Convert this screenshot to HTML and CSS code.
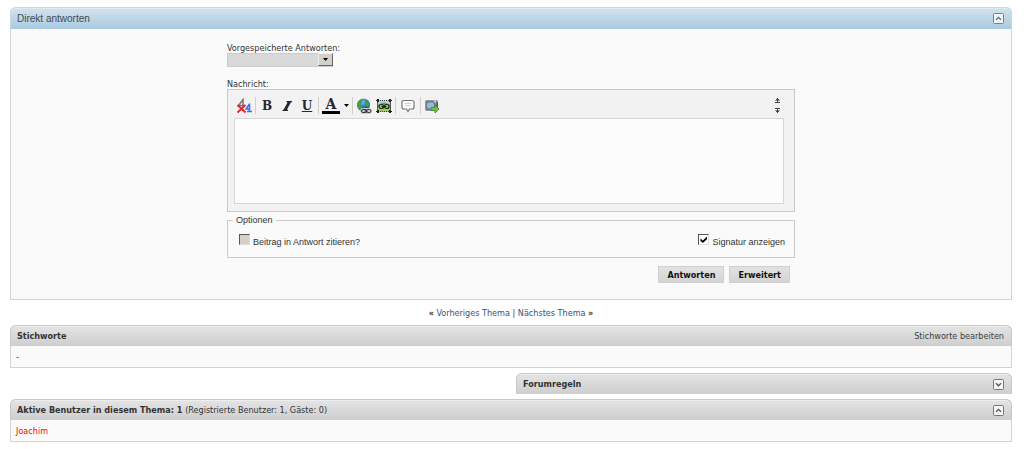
FILE: index.html
```html
<!DOCTYPE html>
<html lang="de">
<head>
<meta charset="utf-8">
<title>Direkt antworten</title>
<link rel="stylesheet" href="styles.css">
</head>
<body>
<main class="page">
  <section class="panel">
    <header class="bar bar-blue">
      <h2 class="bar-title">Direkt antworten</h2>
      <button class="collapse" type="button" aria-label="Einklappen">
        <svg width="11" height="11" viewBox="0 0 11 11"><rect class="box" x=".5" y=".5" width="10" height="10" rx="1"/><path class="chevron" d="M3 6.800 5.500 4.300 8 6.800"/></svg>
      </button>
    </header>
    <form class="reply">
      <div class="reply-column">
        <label class="label" for="saved">Vorgespeicherte Antworten:</label>
        <div class="select">
          <select id="saved"><option></option></select>
          <span class="select-arrow"></span>
        </div>
        <label class="label label-message" for="message">Nachricht:</label>
        <div class="editor">
          <div class="toolbar">
            <button class="tool" type="button" aria-label="Formatierung entfernen">
              <svg width="16" height="16" viewBox="0 0 16 16"><path d="M7 9V1.500L2.500 7.500H9" fill="none" stroke="#777" stroke-width="1.500"/><path d="M13.500 5.500v8M11 13.500h5M13.500 6 10 11h3" fill="none" stroke="#3d6bf2" stroke-width="1.500"/><path d="m1.500 7 8 7.500M9.500 7l-8 7.500" stroke="#e8202a" stroke-width="1.800"/></svg>
            </button>
            <span class="divider"></span>
            <button class="tool" type="button" aria-label="Fett">B</button>
            <button class="tool" type="button" aria-label="Kursiv">
              <svg width="10" height="10" viewBox="0 0 10 10"><path d="M4.500 0H10v1l-1.200.5L5 8.500l1 .5v1H.5V9l1.200-.5L5.500 1.500l-1-.5z" fill="#252630"/></svg>
            </button>
            <button class="tool tool-underline" type="button" aria-label="Unterstrichen">U</button>
            <span class="divider"></span>
            <button class="tool tool-color" type="button" aria-label="Schriftfarbe"><span class="color-letter">A</span></button>
            <button class="tool tool-drop" type="button" aria-label="Farbe wählen"><svg width="5" height="3" viewBox="0 0 5 3"><path d="M0 0h5L2.500 3z"/></svg></button>
            <span class="divider"></span>
            <button class="tool" type="button" aria-label="Link einfügen">
              <svg width="16" height="16" viewBox="0 0 16 16"><defs><radialGradient id="sea" cx=".4" cy=".25"><stop offset="0" stop-color="#7cc8fa"/><stop offset="1" stop-color="#1860ad"/></radialGradient></defs><circle cx="7.500" cy="7" r="6.500" fill="url(#sea)"/><path d="M2 3.500 5.500 1l2 .5-1 2L5 6 3 7.500 6 9l-.5 3.500Q1 11 1 7zM9 2l3 1.500 1.800 3L12 9 9.500 7.500 9 5z" fill="#45a33b"/><rect x="4.500" y="10" width="11" height="6" rx="2" fill="#ccc"/><rect x="5.500" y="11.500" width="5" height="3" rx="1.500" fill="none" stroke="#333"/><rect x="10" y="11.500" width="5" height="3" rx="1.500" fill="none" stroke="#333"/><path d="M8.500 13h3.500" stroke="#333"/></svg>
            </button>
            <button class="tool" type="button" aria-label="Grafik einfügen">
              <svg width="16" height="16" viewBox="0 0 16 16"><rect x="2" y="2" width="12" height="12" fill="#9bd05c"/><path d="M2 2h12v4H2z" fill="#a8d9ef"/><path d="M2 7q6-5 12 0v2H2z" fill="#6da83a"/><path d="M2 2.500h12M2 13.500h12" stroke="#444" stroke-dasharray="1 1"/><path d="M1.500 3v10M14.500 3v10" stroke="#555"/><path d="M1 1h2v3H1zM13 1h2v3h-2zM1 12h2v3H1zM13 12h2v3h-2zM0 2h1v1H0zM15 2h1v1h-1zM0 13h1v1H0zM15 13h1v1h-1z" fill="#222"/><rect x="3" y="6.500" width="4.500" height="4" rx="2" fill="#aac590" stroke="#222" stroke-width="1.200"/><rect x="8.500" y="6.500" width="4.500" height="4" rx="2" fill="#aac590" stroke="#222" stroke-width="1.200"/><path d="M5.500 8.500h5" stroke="#222" stroke-width="1.200"/></svg>
            </button>
            <span class="divider"></span>
            <button class="tool tool-quote" type="button" aria-label="Zitat einfügen">
              <svg width="14" height="14" viewBox="0 0 14 14"><path d="M3 1.500h8q2 0 2 2V8q0 2-2 2H8.500L7 12.500 5.500 10H3Q1 10 1 8V3.500q0-2 2-2z" fill="#fff" stroke="#777" stroke-width="1.200"/><path d="M4 4.500h6M4 6.500h6" stroke="#ccc"/></svg>
            </button>
            <span class="divider"></span>
            <button class="tool" type="button" aria-label="Video einfügen">
              <svg width="16" height="16" viewBox="0 0 16 16"><rect x="1.500" y="2.500" width="12" height="10" rx="1" fill="#737b83" stroke="#92989d"/><path d="M9 2.500h3v3" fill="#d2d6d8"/><rect x="3" y="4.500" width="7" height="6" rx="2" fill="#8cbdea"/><path d="M13 4h1v8h-1z" fill="#555"/><path d="M7 9.500h4V7l4 4-4 4v-2.500H7z" fill="#72c044" stroke="#388523" stroke-width=".8"/></svg>
            </button>
            <span class="resize">
              <button class="resize-step" type="button" aria-label="Verkleinern"><svg width="5" height="5" viewBox="0 0 5 5"><path d="M2 0h1v1h1v1H3v2h2v1H0V4h2V2H1V1h1z"/><path d="M0 2h5v1H0z" opacity=".5"/></svg></button>
              <button class="resize-step" type="button" aria-label="Vergrößern"><svg width="5" height="5" viewBox="0 0 5 5"><path d="M2 5h1V4h1V3H3V1h2V0H0v1h2v2H1v1h1z"/><path d="M0 2h5v1H0z" opacity=".5"/></svg></button>
            </span>
          </div>
          <textarea class="message" id="message"></textarea>
        </div>
        <fieldset class="options">
          <legend>Optionen</legend>
          <div class="options-row">
            <label class="check"><input type="checkbox" disabled><span>Beitrag in Antwort zitieren?</span></label>
            <label class="check"><input type="checkbox" checked><span>Signatur anzeigen</span></label>
          </div>
        </fieldset>
        <div class="actions">
          <button class="action" type="submit">Antworten</button>
          <button class="action" type="button">Erweitert</button>
        </div>
      </div>
    </form>
  </section>

  <nav class="thread-nav"><b>«</b> <a href="#prev">Vorheriges Thema</a> | <a href="#next">Nächstes Thema</a> <b>»</b></nav>

  <section class="panel">
    <header class="bar">
      <h2 class="bar-title">Stichworte</h2>
      <a class="bar-link" href="#tags">Stichworte bearbeiten</a>
    </header>
    <div class="panel-body">-</div>
  </section>

  <section class="panel panel-half">
    <header class="bar">
      <h2 class="bar-title">Forumregeln</h2>
      <button class="collapse" type="button" aria-label="Ausklappen">
        <svg width="11" height="11" viewBox="0 0 11 11"><rect class="box" x=".5" y=".5" width="10" height="10" rx="1"/><path class="chevron" d="M3 4.300 5.500 6.800 8 4.300"/></svg>
      </button>
    </header>
  </section>

  <section class="panel">
    <header class="bar">
      <h2 class="bar-title">Aktive Benutzer in diesem Thema: 1 <span class="bar-note">(Registrierte Benutzer: 1, Gäste: 0)</span></h2>
      <button class="collapse" type="button" aria-label="Einklappen">
        <svg width="11" height="11" viewBox="0 0 11 11"><rect class="box" x=".5" y=".5" width="10" height="10" rx="1"/><path class="chevron" d="M3 6.800 5.500 4.300 8 6.800"/></svg>
      </button>
    </header>
    <div class="panel-body"><a class="user" href="#joachim">Joachim</a></div>
  </section>
</main>
</body>
</html>
```
FILE: styles.css
```css
* {
  box-sizing: border-box;
}

body {
  margin: 0;
  background: #fff;
  color: #333;
  font: 9px/12px "DejaVu Sans Condensed", "DejaVu Sans", sans-serif;
}

button {
  padding: 0;
  border: 0;
  background: none;
  color: inherit;
  font: inherit;
}

a {
  color: #30577a;
  text-decoration: none;
}

.page {
  padding: 7px 12px 8px 10px;
}

.panel {
  margin-bottom: 5px;
  border: 1px solid #d3d3d3;
  border-top: 0;
  border-radius: 6px 6px 0 0;
  background: #fafafa;
}

.panel-half {
  width: 496px;
  max-width: 100%;
  margin-left: auto;
  border-bottom: 0;
}

.bar {
  display: flex;
  align-items: center;
  justify-content: space-between;
  height: 21px;
  margin: 0 -1px;
  padding: 0 7px 0 6px;
  border: 1px solid #c8c8c8;
  border-width: 1px 1px 0;
  border-radius: 6px 6px 0 0;
  background: linear-gradient(#e4e4e4, #cecece);
  box-shadow: inset 0 1px #eee;
}

.bar-blue {
  height: 22px;
  border-color: #c5d9e5;
  background: linear-gradient(#d2e2ed, #a9cae0);
  box-shadow: inset 0 1px #e0ecf3;
}

.bar-title {
  margin: 0;
  font-size: 9px;
  font-weight: bold;
  color: #333;
}

.bar-blue .bar-title {
  font: 10px/12px "Liberation Sans", Arial, sans-serif;
  color: #3e4a54;
}

.bar-note {
  font-weight: normal;
}

.bar-link {
  color: #3e3e3e;
}

.collapse {
  display: flex;
}

.box {
  fill: #f4f4f4;
  stroke: #777;
}

.chevron {
  fill: none;
  stroke: #555;
  stroke-width: 1.3;
}

.bar-blue .box {
  stroke: #4b8fb5;
}

.bar-blue .chevron {
  stroke: #387da5;
}

.panel-body {
  padding: 5px 5px 4px;
}

.user {
  color: #f00;
}

.reply {
  display: flex;
  justify-content: center;
  padding: 13px 8px 16px;
}

.reply-column {
  width: 568px;
  max-width: 100%;
}

.label {
  display: block;
  height: 11px;
}

.label-message {
  margin-top: 11px;
}

.select {
  display: grid;
  width: 106px;
  height: 14px;
}

.select select,
.select-arrow {
  grid-area: 1 / 1;
}

.select select {
  appearance: none;
  width: 100%;
  height: 14px;
  padding: 0;
  border: 1px solid #ccc;
  border-radius: 0;
  background: #d9d9d9;
}

.select-arrow {
  display: grid;
  place-items: center;
  justify-self: end;
  width: 15px;
  height: 13px;
  border: 1px solid;
  border-color: #eee #666 #666 #eee;
  background: #d4d0c8;
  pointer-events: none;
}

.select-arrow::before {
  width: 5px;
  height: 3px;
  background: #000;
  clip-path: polygon(0 0, 100% 0, 50% 100%);
  content: "";
}

.editor {
  padding: 3px 10px 7px 6px;
  border: 1px solid #c8c8c8;
  background: #f2f2f2;
}

.toolbar {
  display: flex;
  align-items: center;
  height: 25px;
}

.tool {
  display: flex;
  align-items: center;
  justify-content: center;
  width: 20px;
  height: 18px;
  color: #252630;
  font: bold 12px/14px "DejaVu Serif", serif;
}

.tool-underline {
  text-decoration: underline;
}

.tool-color {
  width: 22px;
}

.color-letter {
  width: 18px;
  border-bottom: 3px solid #000;
  font-size: 14px;
  line-height: 13px;
}

.tool-drop {
  width: 9px;
}

.tool-quote {
  width: 22px;
}

.divider {
  width: 1px;
  height: 17px;
  margin: 0 1px;
  background: #d0d0ca;
}

.resize {
  display: grid;
  gap: 5px;
  margin-left: auto;
  padding-right: 4px;
}

.resize-step {
  display: flex;
}

.resize-step svg {
  fill: #444;
}

.message {
  display: block;
  width: 100%;
  height: 86px;
  padding: 4px;
  border: 1px solid #d6d6d6;
  background: #fcfcfc;
  font: inherit;
  resize: none;
}

.options {
  margin: 2px 0 0;
  padding: 8px 9px 9px 11px;
  border: 1px solid #ccc;
  font: 9px/12px "Liberation Sans", Arial, sans-serif;
}

.options legend {
  margin-left: -6px;
  padding: 0 3px;
}

.options-row {
  display: flex;
  justify-content: space-between;
}

.check {
  display: flex;
  align-items: flex-start;
  gap: 3px;
}

.check span {
  padding-top: 2px;
}

.check input {
  display: grid;
  place-items: center;
  appearance: none;
  width: 11px;
  height: 11px;
  margin: 0;
  border: 1px solid;
  border-color: #555 #ddd #ddd #555;
  background: #fff;
}

.check input:disabled {
  background: #d4d0c8;
}

.check input:checked::before {
  width: 7px;
  height: 7px;
  background: #000;
  clip-path: polygon(0 35%, 35% 65%, 100% 0, 100% 40%, 35% 100%, 0 70%);
  content: "";
}

.actions {
  display: flex;
  justify-content: flex-end;
  gap: 5px;
  margin-top: 8px;
  padding-right: 5px;
}

.action {
  height: 17px;
  padding: 0 8px;
  border: 1px solid #d0d0d0;
  background: linear-gradient(#e2e2e2, #d4d4d4);
  color: #111;
  font: bold 9px/14px "DejaVu Sans Condensed", "DejaVu Sans", sans-serif;
}

.thread-nav {
  margin: 7px 0 6px;
  text-align: center;
}
```
